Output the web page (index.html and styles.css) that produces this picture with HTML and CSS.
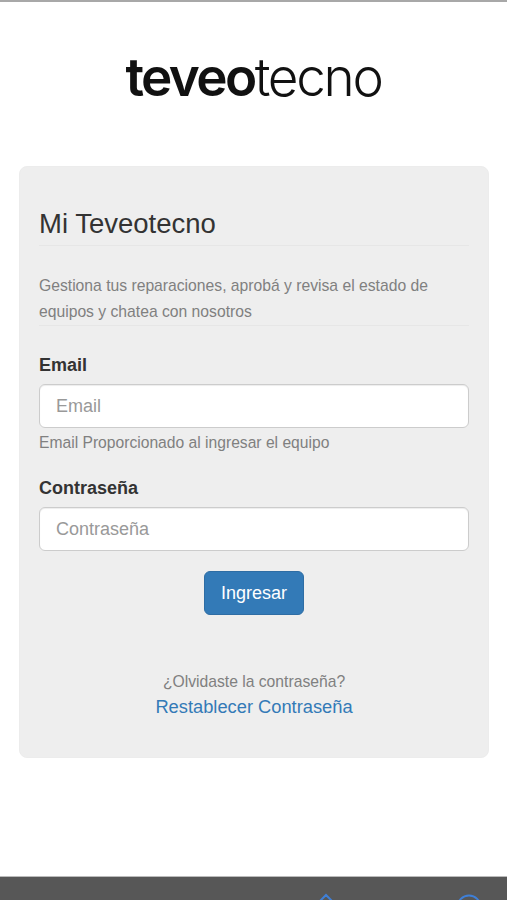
FILE: index.html
```html
<!DOCTYPE html>
<html lang="es">
  <head>
    <meta charset="UTF-8" />
    <meta name="viewport" content="width=device-width, initial-scale=1.0" />
    <title>Mi Teveotecno</title>
    <link rel="stylesheet" href="styles.css">
  </head>
  <body>
    <div class="logo"><b>teveo</b>tecno</div>
    <div class="card">
      <h1>Mi Teveotecno</h1>
      <p class="lead">Gestiona tus reparaciones, aprobá y revisa el estado de equipos y chatea con nosotros</p>
      <form>
        <label for="email">Email</label>
        <input id="email" type="text" placeholder="Email" />
        <span class="help">Email Proporcionado al ingresar el equipo</span>
        <label for="pass" class="second">Contraseña</label>
        <input id="pass" type="text" placeholder="Contraseña" />
        <div class="controler">
          <button type="button">Ingresar</button>
        </div>
      </form>
      <div class="forgot">
        <span>¿Olvidaste la contraseña?</span>
        <a href="#">Restablecer Contraseña</a>
      </div>
    </div>
    <div class="bottom-bar">
      <svg class="tab-home" width="20" height="23" viewBox="0 0 20 23">
        <path d="M1 11 L10 2 L19 11 M4 9 V22 H16 V9" fill="none" stroke="#3f7fd6" stroke-width="2" />
      </svg>
      <svg class="tab-user" width="26" height="23" viewBox="0 0 26 23">
        <circle cx="13" cy="13" r="11.5" fill="none" stroke="#3f7fd6" stroke-width="2" />
      </svg>
    </div>
  </body>
</html>
```

FILE: styles.css
```css
* {
  box-sizing: border-box;
  font-family: "Liberation Sans", Arial, sans-serif;
}
html,
body {
  height: 100%;
}
body {
  margin: 0;
  display: flex;
  flex-direction: column;
  height: 900px;
  overflow: hidden;
  background: #fff;
  border-top: 2px solid #a8a8a8;
}
.logo {
  height: 164px;
  padding-top: 47px;
  text-align: center;
  font-family: "Inter", sans-serif;
  font-size: 53px;
  line-height: 56px;
  font-weight: 300;
  color: #111;
  letter-spacing: -2.3px;
}
.logo b {
  font-family: "Inter", sans-serif;
  font-weight: 600;
  letter-spacing: -2.6px;
}
.card {
  margin: 0 18px 0 19px;
  height: 592px;
  padding: 39px 19px 0 19px;
  background: #eee;
  border: 1px solid #ececec;
  border-radius: 8px;
}
h1 {
  margin: 0;
  padding-bottom: 3px;
  font-size: 27.5px;
  line-height: 36px;
  font-weight: 400;
  color: #333;
  border-bottom: 1px solid #e6e6e6;
}
.lead {
  margin: 27px 0 0;
  font-size: 15.7px;
  line-height: 26px;
  color: #808080;
  border-bottom: 1px solid #e6e6e6;
}
form {
  margin-top: 27px;
}
label {
  display: block;
  font-size: 18px;
  line-height: 24px;
  font-weight: 700;
  color: #333;
}
.second {
  margin-top: 23px;
}
input {
  display: block;
  width: 100%;
  height: 44px;
  margin-top: 7px;
  padding: 0 16px;
  font-size: 18px;
  color: #555;
  background: #fff;
  border: 1px solid #ccc;
  border-radius: 6px;
  box-shadow: inset 0 1px 1px rgba(0, 0, 0, 0.075);
}
input::placeholder {
  color: #999;
}
.help {
  display: block;
  margin-top: 5px;
  font-size: 15.65px;
  line-height: 20px;
  color: #808080;
}
.controler {
  margin-top: 20px;
  text-align: center;
}
button {
  width: 100px;
  height: 44px;
  font-size: 18px;
  color: #fff;
  background: #337ab7;
  border: 1px solid #2e6da4;
  border-radius: 6px;
}
.forgot {
  margin-top: 55px;
  text-align: center;
}
.forgot span {
  display: block;
  font-size: 15.7px;
  line-height: 24px;
  color: #808080;
}
.forgot a {
  display: block;
  font-size: 18.3px;
  line-height: 26px;
  color: #337ab7;
  text-decoration: none;
}
.bottom-bar {
  position: relative;
  margin-top: auto;
  height: 24px;
  background: #575757;
  border-top: 1px solid #bbb;
  overflow: hidden;
}
.tab-home {
  position: absolute;
  left: 316px;
  top: 16px;
}
.tab-user {
  position: absolute;
  left: 456px;
  top: 17px;
}
```
